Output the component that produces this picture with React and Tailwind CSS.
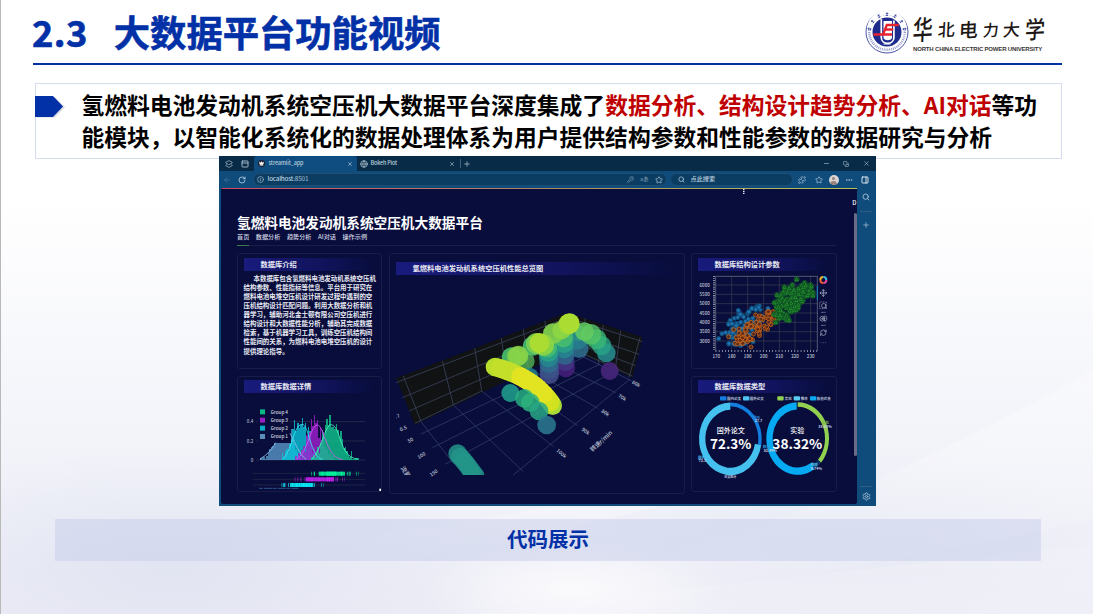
import React from "react";
import {
  Search, Star, Plus, X, Minus, Copy, RotateCw, ArrowLeft, Info, Globe, KeyRound,
  Settings, Ellipsis, Puzzle, Move, RefreshCw, PanelRight, PanelTop, Layers2, ZoomIn, Crown,
} from "lucide-react";

const CJK = "font-['Noto_Sans_CJK_SC','Liberation_Sans',sans-serif]";

/* Deterministic pseudo random numbers for the sample data. */
function makeRandom(seed) {
  let s = seed;
  return () => {
    s = (s * 16807) % 2147483647;
    return s / 2147483647;
  };
}

function Backdrop() {
  return (
    <svg className="absolute inset-0 h-full w-full" viewBox="0 0 1093 614" preserveAspectRatio="none">
      <defs>
        <linearGradient id="bgBase" x1="0" y1="0" x2="0" y2="1">
          <stop offset="0" stopColor="#ffffff" />
          <stop offset="0.32" stopColor="#ffffff" />
          <stop offset="0.6" stopColor="#f6f7fb" />
          <stop offset="0.85" stopColor="#eff0f8" />
          <stop offset="1" stopColor="#ededf6" />
        </linearGradient>
        <radialGradient id="bgLeft" cx="0.5" cy="0.5" r="0.5">
          <stop offset="0" stopColor="#d9ddee" stopOpacity="0.6" />
          <stop offset="1" stopColor="#d9ddee" stopOpacity="0" />
        </radialGradient>
        <radialGradient id="bgGlow" cx="0.5" cy="0.5" r="0.5">
          <stop offset="0" stopColor="#ffffff" stopOpacity="0.75" />
          <stop offset="1" stopColor="#ffffff" stopOpacity="0" />
        </radialGradient>
        <linearGradient id="bgSweep" x1="0.2" y1="1" x2="0.6" y2="0">
          <stop offset="0" stopColor="#ffffff" stopOpacity="0" />
          <stop offset="1" stopColor="#ffffff" stopOpacity="0.28" />
        </linearGradient>
      </defs>
      <rect width="1093" height="614" fill="url(#bgBase)" />
      <ellipse cx="170" cy="570" rx="330" ry="120" fill="url(#bgLeft)" />
      <ellipse cx="850" cy="540" rx="260" ry="90" fill="url(#bgLeft)" opacity="0.5" />
      <path d="M100 556 Q 380 540 540 508 L 680 500 Q 540 540 400 560 Z" fill="url(#bgSweep)" />
      <path d="M380 598 Q 560 580 720 540 Q 900 480 1093 370 L 1093 520 Q 800 580 560 614 L 380 614 Z" fill="url(#bgSweep)" />
      <path d="M470 614 Q 800 575 1093 545 L 1093 614 Z" fill="#ffffff" opacity="0.14" />
      <ellipse cx="575" cy="590" rx="150" ry="50" fill="url(#bgGlow)" />
    </svg>
  );
}

function Emblem() {
  const ring = [-80, -54, -27, 0, 27, 54, 80];
  return (
    <svg className="h-[44px] w-[44px] shrink-0" viewBox="0 0 44 44">
      <circle cx="22" cy="22" r="21" fill="#fff" stroke="#4b55a5" strokeWidth="1" />
      <circle cx="22" cy="22" r="17.8" fill="none" stroke="#8b92c8" strokeWidth="2.4" strokeDasharray="0.8 0.9" pathLength="100" />
      <path d="M4.500 20 A17.5 17.5 0 0 1 39.500 20" fill="none" stroke="#fff" strokeWidth="5" />
      {ring.map((a) => (
        <g key={a} transform={`rotate(${a} 22 22)`}>
          <path d="M20.8 3.4h2.6M22 2.3v3.6M20.8 5.4h2.2" stroke="#2b3594" strokeWidth="0.7" fill="none" />
        </g>
      ))}
      <circle cx="22" cy="22" r="14.500" fill="#1e2a8c" />
      <path d="M16.300 9v18.500c0 7.800 12.600 7.800 12.600 0v-17" fill="none" stroke="#fff" strokeWidth="1.700" />
      <path d="M18.500 11h8.500v16.500c0 3.500-8.500 3.500-8.500 0z" fill="#fff" />
      <path d="M8.500 24.500h9.500l3.800-9.500h12M20.300 19.500h8M18 24.500h9" fill="none" stroke="#e8232f" strokeWidth="2.300" />
      <path d="M18.500 34h7" stroke="#fff" strokeWidth="1" />
    </svg>
  );
}

function University() {
  return (
    <div className="flex items-start gap-[4px]">
      <Emblem />
      <div className="flex w-[132px] flex-col pt-[1px] text-[#1d1715]">
        <div className={"flex h-[35px] -skew-x-6 items-center justify-between font-medium " + CJK}>
          <span className="inline-block -rotate-3 scale-y-[1.350] text-[20px] leading-none">华</span>
          <span className="inline-block -rotate-3 text-[17px] leading-none">北</span>
          <span className="inline-block -rotate-3 text-[19px] leading-none">电</span>
          <span className="inline-block -rotate-3 text-[16px] leading-none">力</span>
          <span className="inline-block -rotate-3 text-[17px] leading-none">大</span>
          <span className="inline-block -rotate-3 scale-y-[1.200] text-[20px] leading-none">学</span>
        </div>
        <div className="whitespace-nowrap font-['Liberation_Sans',sans-serif] text-[6px] font-bold leading-[7px] tracking-[-0.170px] text-[#3a3533]">
          NORTH CHINA ELECTRIC POWER UNIVERSITY
        </div>
      </div>
    </div>
  );
}

function BrowserTabs() {
  return (
    <div className="flex h-[15px] items-stretch bg-[#082c47] text-[5.500px] font-medium text-[#b9cbd9]">
      <div className="flex w-[35px] items-center gap-[8px] pl-[6px]">
        <Layers2 size={8} strokeWidth={2} />
        <PanelTop size={8} strokeWidth={2.5} />
      </div>
      <div className="flex w-[103px] items-center rounded-t-[3px] bg-[#0f4c80] pl-[4px] pr-[4px]">
        <span className="flex h-[7px] w-[7px] items-center justify-center rounded-full bg-[#1a1d2c]">
          <Crown size={5} strokeWidth={3} color="#fff" fill="#fff" />
        </span>
        <span className="ml-[4px] flex-1 leading-none tracking-[-0.150px]">streamlit_app</span>
        <X size={6} strokeWidth={2.5} />
      </div>
      <div className="flex w-[103px] items-center pl-[3px] pr-[5px]">
        <Globe size={8} />
        <span className="ml-[3px] flex-1 leading-none tracking-[-0.200px]">Bokeh Plot</span>
        <X size={6} strokeWidth={2.5} />
      </div>
      <div className="flex flex-1 items-center gap-[2px]">
        <span className="h-[9px] w-px bg-[#41607a]" />
        <Plus size={8} />
      </div>
      <div className="flex w-[57px] items-center justify-between pr-[6px] pl-[4px]">
        <Minus size={7} />
        <Copy size={6} className="-scale-x-100 rotate-90" />
        <X size={7} />
      </div>
    </div>
  );
}

function BrowserToolbar() {
  return (
    <div className="flex h-[17px] items-center bg-[#0f4b7b] pl-[4px] text-[#b9cfdf]">
      <ArrowLeft size={8} className="text-[#4a7ba0]" />
      <RotateCw size={8} strokeWidth={2.5} className="ml-[7px]" />
      <div className="ml-[7px] flex h-[13px] w-[414px] items-center rounded-full border border-[#1d4f75] bg-[#0b3c62] px-[3px]">
        <Info size={7} />
        <span className="ml-[4px] flex-1 text-[6.300px] font-medium leading-none tracking-[-0.220px]">localhost<span className="text-[#8fadc2]">:8501</span></span>
        <KeyRound size={7} className="text-[#7f9db3]" />
        <span className="ml-[6px] text-[5.500px] leading-none text-[#7f9db3]">aあ</span>
        <Star size={8} className="ml-[6px]" />
      </div>
      <div className="ml-[3px] flex h-[13px] w-[123px] items-center rounded-full border border-[#1d4f75] bg-[#0b3c62] px-[7px]">
        <Search size={7} strokeWidth={2.5} />
        <span className="ml-[6px] text-[6.200px] font-medium leading-none">点此搜索</span>
      </div>
      <Puzzle size={8} className="ml-[5px]" />
      <Star size={8} className="ml-[9px]" />
      <span className="ml-[6px] flex h-[10px] w-[10px] flex-col items-center overflow-hidden rounded-full bg-[#d9d4d2] pt-[2px]">
        <span className="h-[3px] w-[3px] rounded-full bg-[#98837a]" />
        <span className="mt-[1px] h-[4px] w-[7px] rounded-t-full bg-[#98837a]" />
      </span>
      <Ellipsis size={8} className="ml-[6px]" />
      <PanelRight size={8} strokeWidth={2.5} className="ml-[8px] text-white" />
    </div>
  );
}

function SideRail() {
  return (
    <div className="flex w-[19px] flex-col items-center bg-[#0f4b7b] pb-[3px] pt-[5px] text-[#b3cbdc]">
      <Search size={8} strokeWidth={2.5} />
      <span className="mt-[10px] h-px w-[12px] bg-[#2d6089]" />
      <Plus size={8} className="mt-[9px]" />
      <span className="mt-auto h-px w-[12px] bg-[#2d6089]" />
      <Settings size={9} className="mt-[5px]" />
    </div>
  );
}

function Stripe({ children }) {
  return (
    <div className="mx-[6px] flex h-[13px] shrink-0 items-center bg-gradient-to-r from-[#191b7d] via-[#11135c] via-60% to-[#080d3c] pl-[17px] text-[7.280px] font-bold leading-none text-[#e6e8f2]">
      {children}
    </div>
  );
}

function Card({ title, className, children }) {
  return (
    <div className={"flex flex-col rounded-[3px] border border-[#171c49] " + className}>
      <Stripe>{title}</Stripe>
      {children}
    </div>
  );
}

const introLines = [
  "本数据库包含氢燃料电池发动机系统空压机",
  "结构参数、性能指标等信息。平台用于研究在",
  "燃料电池电堆空压机设计研发过程中遇到的空",
  "压机结构设计匹配问题。利用大数据分析和机",
  "器学习，辅助河北金士顿有限公司空压机进行",
  "结构设计和大数据性能分析，辅助其完成数据",
  "检索，基于机器学习工具，训练空压机结构间",
  "性能间的关系，为燃料电池电堆空压机的设计",
  "提供理论指导。",
];

function Intro() {
  return (
    <div className="mt-[3px] pl-[6px] text-[6.440px] font-bold leading-[9.060px] text-[#e8eaf2]">
      {introLines.map((l, i) => (
        <div key={i} className={i === 0 ? "whitespace-nowrap pl-[10px]" : "whitespace-nowrap"}>{l}</div>
      ))}
    </div>
  );
}

const histGroups = [
  { color: "#5a96c8", x: 90, bars: [6, 6, 8, 2, 12, 22, 34, 40, 42, 50, 50, 50, 50, 50, 50, 50, 50, 50, 50, 50, 92, 60, 50, 30, 22, 12, 8, 6] },
  { color: "#08c4da", x: 155, bars: [22, 10, 28, 34, 20, 48, 62, 92, 120, 86, 112, 96, 104, 126, 100, 112, 70, 100, 86, 42, 22, 36, 14, 8, 4] },
  { color: "#a01fd0", x: 196, bars: [12, 6, 20, 14, 30, 42, 24, 76, 56, 84, 124, 102, 134, 110, 120, 66, 96, 60, 84, 40, 34, 16, 22, 8, 12, 4] },
  { color: "#0fc78e", x: 243, bars: [10, 16, 8, 26, 38, 20, 52, 90, 70, 104, 122, 106, 134, 100, 98, 92, 108, 90, 70, 86, 62, 36, 40, 26, 14, 10, 28, 4, 2, 6, 6] },
];

const histCurves = [
  ["#8cc3ea", "M90 267 Q120 250 137 218 M180 190 C200 225 205 250 228 268"],
  ["#3cecf5", "M158 266 C185 250 190 164 216 163 C238 163 240 262 278 268"],
  ["#d05af5", "M198 268 C235 250 240 166 262 165 C285 168 285 262 338 269"],
  ["#4df5be", "M245 268 C275 240 285 164 303 164 C335 168 325 262 383 267"],
];

const rugRows = [
  { color: "#00f79b", y: 305, from: 243, to: 384, a: 266, b: 345 },
  { color: "#c324ee", y: 322, from: 194, to: 342, a: 228, b: 306 },
  { color: "#0be8f5", y: 339, from: 154, to: 279, a: 180, b: 250 },
];

function HistogramChart() {
  const rnd = makeRandom(77);
  return (
    <svg className="mt-px h-[97px] w-[143px]" viewBox="24 72 429 291">
      {[155, 213, 270].map((y) => <path key={y} d={`M78 ${y}H405`} stroke="#23294a" strokeWidth="3" />)}
      {[310, 328, 345].map((y) => <path key={y} d={`M68 ${y}H405`} stroke="#1d2444" strokeWidth="3" />)}
      <g fill="#aab0c4" fontSize="13.500" fontWeight="500" textAnchor="end">
        <text x="70" y="160">0.4</text>
        <text x="70" y="218">0.2</text>
        <text x="70" y="275">0</text>
      </g>
      {histGroups.map((g) => (
        <g key={g.color} fill={g.color} opacity="0.8" shapeRendering="crispEdges">
          {g.bars.map((h, i) => <rect key={i} x={g.x + i * 4.600} y={270 - h} width="4.600" height={h} />)}
        </g>
      ))}
      <rect x="82" y="112" width="98" height="103" fill="#080d3c" />
      {histCurves.map(([c, d]) => <path key={c} d={d} fill="none" stroke={c} strokeWidth="2.500" />)}
      {[["#0cb985", 126, 4], ["#9421c2", 151, 3], ["#0aaec4", 175, 2], ["#5990bb", 200, 1]].map(([c, y, n]) => (
        <g key={n}>
          <rect x="90" y={y - 8} width="15" height="15" fill={c} />
          <text x="122" y={y + 5} fontSize="14" fontWeight="500" fill="#cdd2df" textLength="52">{"Group " + n}</text>
        </g>
      ))}
      {rugRows.map((r) => (
        <g key={r.y} fill={r.color}>
          <rect x={r.a} y={r.y} width={r.b - r.a} height="12" opacity="0.85" />
          {Array.from({ length: 26 }, (_, i) => {
            const u = (rnd() + rnd()) / 2;
            const x = r.from + (r.to - r.from) * u;
            return <rect key={i} x={x} y={r.y} width="3" height="12" opacity="0.7" />;
          })}
          <rect x={r.from} y={r.y} width="3" height="12" opacity="0.5" />
          <rect x={r.from + 8} y={r.y} width="3" height="12" opacity="0.6" />
          <rect x={r.to - 6} y={r.y} width="3" height="12" opacity="0.5" />
          <rect x={r.to} y={r.y} width="2" height="12" opacity="0.5" />
        </g>
      ))}
      <path d="M87 355H205" stroke="#2a5288" strokeWidth="3" strokeDasharray="12 3 24 2" />
      <rect x="448" y="356" width="8" height="8" fill="#fff" />
    </svg>
  );
}

/* Spheres of the overview plot, painted back to front: x, y, radius, colour, opacity. */
const spheres = [
  [582, 310, 29, "#2f6f8e", 0.85], [578, 285, 29, "#26808e", 0.8], [574, 262, 27, "#2a918b", 0.8],
  [542, 369, 28, "#46217a", 0.85], [541, 350, 28, "#433b84", 0.7], [540, 332, 28, "#2f6b8e", 0.8], [539, 312, 28, "#25858e", 0.85],
  [537, 295, 29, "#28a386", 0.8], [535, 278, 29, "#4bc16d", 0.8],
  [493, 388, 29, "#434b8a", 0.9], [493, 373, 29, "#3a5489", 0.8], [492, 355, 29, "#2f6b8e", 0.8], [491, 338, 29, "#25858e", 0.9],
  [490, 322, 29, "#28a386", 0.9], [487, 308, 29, "#4bc16d", 0.8],
  [505, 266, 31, "#80cf4d", 0.95], [530, 255, 28, "#8ed645", 0.9],
  [674, 378, 27, "#47267a", 0.9], [664, 324, 28, "#268a8c", 0.9], [650, 302, 29, "#28a386", 0.8], [635, 283, 30, "#38b977", 0.8],
  [618, 268, 31, "#55c568", 0.8], [598, 260, 28, "#64cb60", 0.85],
  [551, 237, 31, "#a5db36", 1], [554, 235, 30, "#aadc32", 1],
  [442, 303, 29, "#43be71", 0.9], [455, 296, 32, "#7ad151", 0.9], [475, 300, 32, "#90d743", 0.9], [463, 294, 30, "#aadc32", 1],
  [379, 336, 29, "#48c16e", 0.9], [420, 348, 29, "#5ac864", 0.7], [400, 332, 30, "#84d44b", 0.9], [395, 335, 30, "#8bd646", 0.6],
  [434, 394, 26, "#23888e", 0.8],
];

const lowerSpheres = [
  [376, 444, 27, "#1f9a8a", 0.9], [418, 460, 28, "#27ad81", 0.85], [436, 473, 28, "#2db27d", 0.85], [462, 498, 28, "#27a785", 0.85],
  [485, 540, 28, "#2b748e", 0.9],
];

/* Dense ridge: near end and far end first, brightest part on top. */
const ridge = Array.from({ length: 32 }, (_, i) => {
  const t = i / 31;
  const x = (1 - t) * (1 - t) * 330 + 2 * t * (1 - t) * 450 + t * t * 503;
  const y = (1 - t) * (1 - t) * 366 + 2 * t * (1 - t) * 397 + t * t * 482;
  const c = t < 0.06 ? "#b8de2b" : t < 0.35 ? "#c3df29" : t < 0.8 ? "#e2e422" : t < 0.94 ? "#d2e21f" : "#a7db36";
  return [x, y, c, Math.abs(t - 0.6)];
}).sort((a, b) => b[3] - a[3]);

function OverviewChart() {
  return (
    <svg className="mt-px h-[216px] w-[294px] shrink-0" viewBox="15 93 882 648">
      <defs>
        <clipPath id="plotClip"><rect x="15" y="93" width="882" height="597" /></clipPath>
      </defs>
      <path d="M33 400L535 207L560 312L90 540Z" fill="#111214" />
      <path d="M535 207L560 207L773 277L742 400L560 312Z" fill="#111214" />
      <g stroke="#3b4560" strokeWidth="2.300" fill="none">
        <path d="M55 393L108 530M172 347L205 480M269 309L290 438M349 279L365 395M415 252L430 370M480 228L490 345" />
        <path d="M33 413L548 218M52 458L550 250M72 498L555 285M90 535L290 438" />
        <path d="M600 220L600 335M655 240L640 357M707 257L690 378M765 278L732 397" />
        <path d="M560 221L772 290M560 258L762 328M560 290L752 362M560 310L742 393" />
      </g>
      <g stroke="#333e6a" strokeWidth="2.300" fill="none">
        <path d="M108 530L205 655M205 480L415 680M290 438L505 604M365 395L578 542M430 370L638 490M490 345L692 443M560 318L740 408" />
        <path d="M108 567L600 335M142 608L645 357M180 658L690 378M385 690L735 402" />
      </g>
      <g clipPath="url(#plotClip)">
        {spheres.map(([x, y, r, c, o], i) => <circle key={i} cx={x} cy={y} r={r} fill={c} opacity={o} />)}
        {ridge.map(([x, y, c], i) => <circle key={i} cx={x} cy={y} r="28" fill={c} />)}
        {lowerSpheres.map(([x, y, r, c, o], i) => <circle key={i} cx={x} cy={y} r={r} fill={c} opacity={o} />)}
        {[[218, 626], [226, 636], [235, 646], [244, 657], [252, 668], [261, 680], [270, 692]].map(([x, y]) => (
          <circle key={x} cx={x} cy={y} r="28" fill="#239488" opacity="0.85" />
        ))}
      </g>
      <g fill="#c0c5d6" fontSize="15" fontWeight="500" textAnchor="middle">
        <text transform="translate(40 518) rotate(-25)">.7</text>
        <text transform="translate(57 555) rotate(-25)">0.5</text>
        <text transform="translate(79 590) rotate(-28)">50</text>
        <text transform="translate(112 636) rotate(-30)">100</text>
        <text transform="translate(149 688) rotate(-35)">150</text>
        <text transform="translate(751 421) rotate(28)">60k</text>
        <text transform="translate(709 462) rotate(30)">70k</text>
        <text transform="translate(658 508) rotate(33)">80k</text>
        <text transform="translate(599 563) rotate(36)">90k</text>
        <text transform="translate(526 629) rotate(40)">100k</text>
        <text transform="translate(653 593) rotate(-43)" fontSize="18">转速r/min</text>
        <g clipPath="url(#plotClip)">
          <text transform="translate(56 684) rotate(58)" fontSize="18">流量</text>
        </g>
      </g>
    </svg>
  );
}

function cloud(seed, n, cx, cy, long, short, angle) {
  const rnd = makeRandom(seed);
  const c = Math.cos(angle);
  const s = Math.sin(angle);
  return Array.from({ length: n }, () => {
    const r = Math.sqrt(rnd());
    const t = rnd() * Math.PI * 2;
    const u = r * Math.cos(t) * long;
    const v = r * Math.sin(t) * short;
    return [cx + u * c - v * s, cy + u * s + v * c];
  });
}

const bluePoints = cloud(15, 62, 178, 242, 78, 44, -0.8).concat([
  [101, 281], [111, 266], [122, 263], [160, 196], [221, 188], [192, 200], [212, 194], [166, 208], [131, 238], [141, 236],
  [132, 295], [146, 297], [162, 296], [190, 286], [204, 290], [154, 242], [176, 216], [190, 222], [249, 190],
]);
const orangePoints = cloud(91, 85, 216, 247, 82, 26, -0.62).concat([[198, 306], [131, 275], [146, 254], [174, 295], [295, 216], [162, 252], [250, 200], [212, 210]]);
const greenPoints = cloud(35, 125, 320, 168, 70, 38, -0.85).concat([[335, 103], [376, 120], [298, 126], [384, 142], [379, 125], [272, 232], [312, 226], [384, 152], [268, 173], [276, 150]]);

function ScatterChart() {
  const xs = [94, 140, 188, 236, 283, 330, 377];
  const ys = [120, 148, 176, 204, 232, 260, 288];
  return (
    <svg className="mt-px h-[96px] w-[144px] shrink-0" viewBox="21 81 432 288">
      <g stroke="#3c4150" strokeWidth="2" fill="none">
        {xs.slice(1).map((x) => <path key={x} d={`M${x} 94V317`} />)}
        {ys.map((y) => <path key={y} d={`M92 ${y}H397`} />)}
      </g>
      <path d="M92 317V94H397V317" fill="none" stroke="#77808f" strokeWidth="2" />
      <path d="M87 94V317" stroke="#b8bdcb" strokeWidth="6" strokeDasharray="2 3.600" />
      <path d="M92 318H397" stroke="#b8bdcb" strokeWidth="6" strokeDasharray="2 7.450" />
      <path d="M397 122V165" stroke="#1784c4" strokeWidth="3" />
      <g fill="#c3c8d6" fontSize="13.500" fontWeight="500" textAnchor="middle">
        {xs.map((x, i) => <text key={x} x={x} y="340">{170 + i * 10}</text>)}
        {ys.map((y, i) => <text key={y} x="59" y={y + 5}>{6000 - i * 500}</text>)}
      </g>
      {bluePoints.map(([x, y], i) => (
        <circle key={i} cx={x} cy={y} r="6.500" fill="#1f78b8" stroke="#10476f" strokeWidth="3" opacity="0.9" />
      ))}
      {orangePoints.map(([x, y], i) => (
        <circle key={i} cx={x} cy={y} r="6" fill="#5c2a17" stroke="#d1691c" strokeWidth="2.600" opacity="0.9" />
      ))}
      {greenPoints.map(([x, y], i) => (
        <g key={i}>
          <circle cx={x} cy={y} r="8" fill="#0d4b23" stroke="#18662a" strokeWidth="1.500" opacity="0.85" />
          <path d={`M${x - 5} ${y + 4}L${x} ${y - 5}L${x + 5} ${y + 4}Z`} fill="#0f4a1f" stroke="#2ba132" strokeWidth="2.200" />
        </g>
      ))}
      <g fill="none" strokeWidth="6">
        <path d="M406 105A9 9 0 0 1 415 96" stroke="#f0b429" />
        <path d="M415 96A9 9 0 0 1 424 105" stroke="#38b6e8" />
        <path d="M424 105A9 9 0 0 1 415 114" stroke="#e5429a" />
        <path d="M415 114A9 9 0 0 1 406 105" stroke="#ef5a35" />
      </g>
      <g className="text-[#9ea6ba]" strokeWidth="2.500">
        <Move x="403" y="132" width="24" height="24" strokeWidth={2.5} />
        <rect x="404" y="171" width="20" height="20" fill="none" stroke="#9ea6ba" strokeWidth="2" strokeDasharray="3 2" />
        <Search x="407" y="173" width="20" height="20" strokeWidth={2.5} />
        <path d="M408 202H422M408 241H422" stroke="#8d95a9" strokeWidth="2" />
        <ZoomIn x="402" y="211" width="22" height="22" strokeWidth={2.5} />
        <rect x="416" y="213" width="9" height="14" rx="4" fill="none" stroke="#9ea6ba" strokeWidth="2" />
        <RefreshCw x="404" y="252" width="22" height="22" strokeWidth={2.5} />
        <path d="M407 293H425" stroke="#9ea6ba" strokeWidth="2" strokeDasharray="2 5" />
      </g>
    </svg>
  );
}

/* Slice of an elliptical ring; angles in degrees, clockwise from the top. */
function slice(cx, cy, outer, inner, from, to) {
  const k = 1.16;
  const p = (r, a) => {
    const t = (a * Math.PI) / 180;
    return `${(cx + r * Math.sin(t)).toFixed(2)} ${(cy - r * k * Math.cos(t)).toFixed(2)}`;
  };
  const big = to - from > 180 ? 1 : 0;
  return `M${p(outer, from)}A${outer} ${outer * k} 0 ${big} 1 ${p(outer, to)}L${p(inner, to)}A${inner} ${inner * k} 0 ${big} 0 ${p(inner, from)}Z`;
}

function DonutCharts() {
  return (
    <svg className="mt-px h-[96px] w-[144px] shrink-0" viewBox="21 73.500 432 288">
      {[["#147de0", 105, 126, "国内论文"], ["#4fc3f2", 174, 194, "国外论文"], ["#92d14f", 277, 299, "实验"], ["#57cdf2", 326, 347, "推荐"], ["#08aaf2", 375, 395, "数值仿真"]].map(([c, x, tx, label]) => (
        <g key={label}>
          <rect x={x} y="80" width="19" height="13" rx="3" fill={c} />
          <text x={tx} y="91" fontSize="10.500" fontWeight="bold" fill="#b9c2d8">{label}</text>
        </g>
      ))}
      <path d={slice(136, 208, 94, 84, 0, 100)} fill="#127fe0" />
      <path d={slice(136, 208, 94, 75, 100, 360)} fill="#45c1ef" />
      <path d={slice(338, 207, 94, 82, 0, 132)} fill="#92d050" />
      <path d={slice(338, 207, 94, 82, 132, 148)} fill="#0b2f66" />
      <path d={slice(338, 207, 94, 75, 148, 358)} fill="#05aaf2" />
      <g fill="#fff" textAnchor="middle">
        <text x="137" y="189" fontSize="21" fontWeight="500">国外论文</text>
        <text x="137" y="237" fontSize="41" fontWeight="bold" textLength="124" lengthAdjust="spacingAndGlyphs">72.3%</text>
        <text x="337" y="189" fontSize="21" fontWeight="500">实验</text>
        <text x="337" y="237" fontSize="41" fontWeight="bold" textLength="150" lengthAdjust="spacingAndGlyphs">38.32%</text>
      </g>
      <g fill="#c9d4e6" fontSize="11" fontWeight="bold" textAnchor="middle">
        <text x="214" y="148" fill="#2d86dc">国内</text>
        <text x="221" y="157">27.7</text>
        <text x="50" y="267" fill="#4fb8e6">国外</text>
        <text x="52" y="277">72.3</text>
        <text x="244" y="234" fill="#2a9fd8">数值</text>
        <text x="256" y="247">52.94%</text>
        <text x="421" y="163" fill="#7fb84d">实验</text>
        <text x="420" y="175">38.32%</text>
        <text x="388" y="290" fill="#57cdf2">推荐</text>
        <text x="394" y="301">8.74%</text>
        <text x="136" y="325" fontSize="9">论文统计</text>
      </g>
    </svg>
  );
}

const navItems = ["首页", "数据分析", "趋势分析", "AI对话", "操作示例"];

function Dashboard() {
  return (
    <div className="relative flex w-[636px] flex-col overflow-hidden rounded-b-[2px] rounded-tl-[2px] bg-[#080d3c] pl-[16px] text-white">
      <div className="-ml-[16px] h-px shrink-0 bg-gradient-to-r from-[#d6465c] via-[#b0855f] to-[#b6c455]" />
      <svg className="absolute left-[522px] top-[1px] h-[5px] w-[2px]" viewBox="0 0 2 5">
        <path d="M0 0H1.500V1.200H0ZM0 1.900H1.500V3.100H0ZM0 3.800H1.500V5H0Z" fill="#e8e8f0" />
      </svg>
      <span className="absolute right-0 top-[12px] text-[6px] font-medium leading-[6px]">D</span>
      <span className="absolute right-0 top-[25px] h-[243px] w-[3px] rounded bg-[#6a6b87]" />
      <div className="mt-[24px] h-[19px] pl-[0.500px] text-[13.670px] font-bold leading-[19px]">氢燃料电池发动机系统空压机大数据平台</div>
      <div className="flex h-[14px] w-[599px] gap-[6.500px] border-b border-[#191e4a] pl-[0.500px] text-[6.150px] font-medium leading-[10px] text-[#d5d8e4]">
        {navItems.map((n, i) => (
          <span key={n} className={i === 0 ? "h-[14px] whitespace-nowrap border-b-[1.500px] border-[#3d7a4c]" : "whitespace-nowrap"}>{n}</span>
        ))}
      </div>
      <div className="mt-[7px] flex w-[600px]">
        <div className="flex w-[145px] flex-col gap-[7px]">
          <Card title="数据库介绍" className="h-[116px] pt-[4px]"><Intro /></Card>
          <Card title="数据库数据详情" className="h-[116px] pt-[3px]"><HistogramChart /></Card>
        </div>
        <div className="ml-[7px]">
          <Card title="氢燃料电池发动机系统空压机性能总览图" className="h-[241px] w-[296px] pt-[8px]"><OverviewChart /></Card>
        </div>
        <div className="ml-[6px] flex w-[146px] flex-col gap-[7px]">
          <Card title="数据库结构设计参数" className="h-[116px] pt-[4px]"><ScatterChart /></Card>
          <Card title="数据库数据类型" className="h-[116px] pt-[3px]"><DonutCharts /></Card>
        </div>
      </div>
    </div>
  );
}

function BrowserWindow() {
  return (
    <div className="relative mx-auto -mt-[3px] flex h-[350px] w-[657px] flex-col overflow-hidden bg-[#0f4b7b]">
      <BrowserTabs />
      <BrowserToolbar />
      <div className="flex flex-1 pb-[2px] pl-[2px]">
        <Dashboard />
        <SideRail />
      </div>
    </div>
  );
}

export default function App() {
  return (
    <div className={"relative h-[614px] w-[1093px] overflow-hidden bg-white " + CJK}>
      <Backdrop />
      <div className="relative flex h-full flex-col border-l border-[#b9b9b9]">
        <header className="ml-[32px] flex h-[65px] w-[1029px] items-start justify-between border-b-2 border-[#0230a6] pr-[17px] pt-[10px]">
          <h1 className="-mt-[3px] -ml-px flex gap-[26px] whitespace-nowrap text-[36.300px] font-bold leading-[48px] text-[#0230a6] [-webkit-text-stroke:0.6px_#0230a6]">
            <span className="tracking-[0.400px]">2.3</span>
            <span>大数据平台功能视频</span>
          </h1>
          <University />
        </header>
        <section className="ml-[34px] mt-[18px] flex h-[76px] w-[1027px] items-start border border-[#d5dcee] bg-white pt-[5px]">
          <svg className="-ml-px mt-[6px] h-[24px] w-[31px] shrink-0" viewBox="0 0 31 24">
            <path d="M2 2H20L30 12L20 22.500H2Z" fill="#c9ccd6" opacity="0.7" />
            <path d="M0 1H18L28 11.500L18 22H0Z" fill="#0230a6" />
          </svg>
          <div className="ml-[15.500px] whitespace-nowrap text-[22.770px] font-bold leading-[32px] text-black">
            <div>
              氢燃料电池发动机系统空压机大数据平台深度集成了
              <span className="text-[#c00000]">数据分析、结构设计趋势分析、AI对话</span>
              等功
            </div>
            <div>能模块，以智能化系统化的数据处理体系为用户提供结构参数和性能参数的数据研究与分析</div>
          </div>
        </section>
        <BrowserWindow />
        <footer className="ml-[54px] mt-[13px] flex h-[42px] w-[986px] items-center justify-center bg-[#c5cdea]/50 pb-[4px] text-[20.500px] font-bold leading-none text-[#0230a6]">
          代码展示
        </footer>
      </div>
    </div>
  );
}
